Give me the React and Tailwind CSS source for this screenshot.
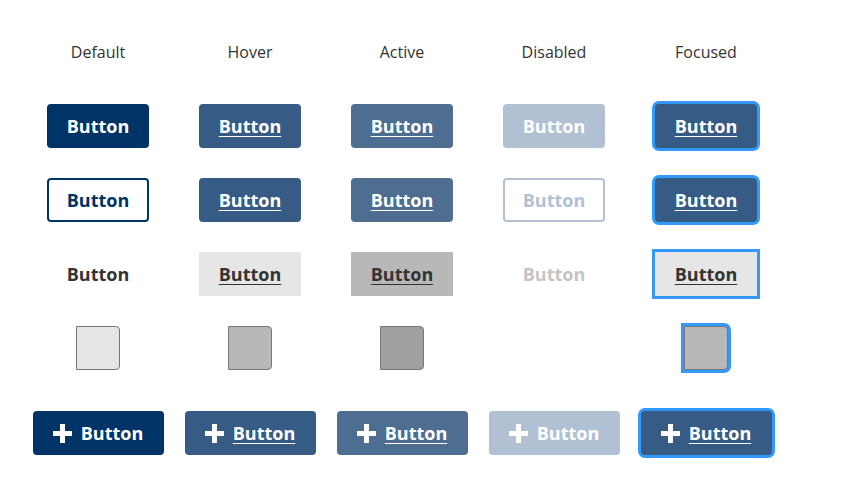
import React from "react";

const states = ["Default", "Hover", "Active", "Disabled", "Focused"];

const Plus = () => (
  <svg width="19" height="19" viewBox="0 0 19 19" className="shrink-0">
    <rect x="7" y="0" width="5" height="19" fill="currentColor" />
    <rect x="0" y="7" width="19" height="5" fill="currentColor" />
  </svg>
);

const Row = ({ h, children }) => (
  <div className={`grid grid-cols-[repeat(5,152px)] items-center justify-items-center ${h}`}>
    {children}
  </div>
);

const label = "font-bold text-[18px] leading-none";

export default function App() {
  return (
    <div
      className="w-[852px] h-[498px] bg-white pl-[22px] pt-[15px]"
      style={{ fontFamily: '"Open Sans", "Liberation Sans", sans-serif' }}
    >
      <Row h="h-[74px]">
        {states.map((s) => (
          <span key={s} className="text-[16px] font-normal text-[#333]">
            {s}
          </span>
        ))}
      </Row>

      {/* solid */}
      <Row h="h-[74px]">
        <div className={`w-[102px] h-[44px] rounded-[4px] bg-[#003366] text-white flex items-center justify-center ${label}`}>Button</div>
        <div className={`w-[102px] h-[44px] rounded-[4px] bg-[#365b84] text-white flex items-center justify-center underline underline-offset-[3px] ${label}`}>Button</div>
        <div className={`w-[102px] h-[44px] rounded-[4px] bg-[#4d6d91] text-white flex items-center justify-center underline underline-offset-[3px] ${label}`}>Button</div>
        <div className={`w-[102px] h-[44px] rounded-[4px] bg-[#b1c1d3] text-white flex items-center justify-center ${label}`}>Button</div>
        <div className={`w-[102px] h-[44px] rounded-[4px] bg-[#365b84] text-white ring-3 ring-[#3399ff] flex items-center justify-center underline underline-offset-[3px] ${label}`}>Button</div>
      </Row>

      {/* outline */}
      <Row h="h-[74px]">
        <div className={`w-[102px] h-[44px] rounded-[4px] border-2 border-[#003366] text-[#003366] flex items-center justify-center ${label}`}>Button</div>
        <div className={`w-[102px] h-[44px] rounded-[4px] bg-[#365b84] text-white flex items-center justify-center underline underline-offset-[3px] ${label}`}>Button</div>
        <div className={`w-[102px] h-[44px] rounded-[4px] bg-[#4d6d91] text-white flex items-center justify-center underline underline-offset-[3px] ${label}`}>Button</div>
        <div className={`w-[102px] h-[44px] rounded-[4px] border-2 border-[#b1c1d3] text-[#b1c1d3] flex items-center justify-center ${label}`}>Button</div>
        <div className={`w-[102px] h-[44px] rounded-[4px] bg-[#365b84] text-white ring-3 ring-[#3399ff] flex items-center justify-center underline underline-offset-[3px] ${label}`}>Button</div>
      </Row>

      {/* text */}
      <Row h="h-[74px]">
        <div className={`w-[102px] h-[44px] text-[#333] flex items-center justify-center ${label}`}>Button</div>
        <div className={`w-[102px] h-[44px] bg-[#e6e6e6] text-[#333] flex items-center justify-center underline underline-offset-[3px] ${label}`}>Button</div>
        <div className={`w-[102px] h-[44px] bg-[#b8b8b8] text-[#333] flex items-center justify-center underline underline-offset-[3px] ${label}`}>Button</div>
        <div className={`w-[102px] h-[44px] text-[#c4c4c4] flex items-center justify-center ${label}`}>Button</div>
        <div className={`w-[102px] h-[44px] bg-[#e6e6e6] text-[#333] ring-3 ring-[#3399ff] flex items-center justify-center underline underline-offset-[3px] ${label}`}>Button</div>
      </Row>

      {/* square */}
      <Row h="h-[74px]">
        <div className="w-[44px] h-[44px] rounded-r-[4px] border border-[#777] bg-[#e6e6e6]" />
        <div className="w-[44px] h-[44px] rounded-r-[4px] border border-[#777] bg-[#b8b8b8]" />
        <div className="w-[44px] h-[44px] rounded-r-[4px] border border-[#777] bg-[#a0a0a0]" />
        <div />
        <div className="w-[44px] h-[44px] rounded-r-[4px] border border-[#777] bg-[#b8b8b8] ring-3 ring-[#3399ff]" />
      </Row>

      {/* icon */}
      <Row h="h-[96px]">
        <div className={`w-[131px] h-[44px] rounded-[4px] bg-[#003366] text-white flex items-center justify-center gap-[9px] ${label}`}><Plus /><span>Button</span></div>
        <div className={`w-[131px] h-[44px] rounded-[4px] bg-[#365b84] text-white flex items-center justify-center gap-[9px] ${label}`}><Plus /><span className="underline underline-offset-[3px]">Button</span></div>
        <div className={`w-[131px] h-[44px] rounded-[4px] bg-[#4d6d91] text-white flex items-center justify-center gap-[9px] ${label}`}><Plus /><span className="underline underline-offset-[3px]">Button</span></div>
        <div className={`w-[131px] h-[44px] rounded-[4px] bg-[#b1c1d3] text-white flex items-center justify-center gap-[9px] ${label}`}><Plus /><span>Button</span></div>
        <div className={`w-[131px] h-[44px] rounded-[4px] bg-[#365b84] text-white ring-3 ring-[#3399ff] flex items-center justify-center gap-[9px] ${label}`}><Plus /><span className="underline underline-offset-[3px]">Button</span></div>
      </Row>
    </div>
  );
}
